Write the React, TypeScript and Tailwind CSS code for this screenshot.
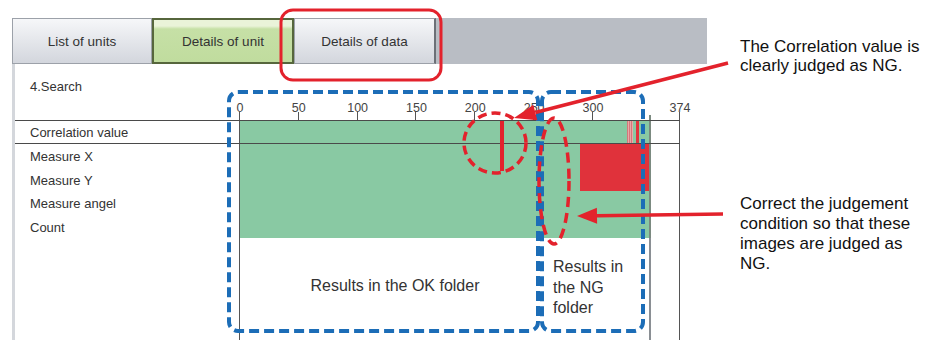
import React from 'react';

const SCALE = 440 / 374;
const ticks = [0, 50, 100, 150, 200, 250, 300, 374];
const measureRows = ['Measure X', 'Measure Y', 'Measure angel', 'Count'];

const RED = '#e3222c';
const BLUE = '#1c6db7';

function Arrow({ from, tip, head = 22, half = 8 }: { from: [number, number]; tip: [number, number]; head?: number; half?: number }) {
  const dx = from[0] - tip[0];
  const dy = from[1] - tip[1];
  const len = Math.hypot(dx, dy);
  const ux = dx / len;
  const uy = dy / len;
  const bx = tip[0] + ux * head;
  const by = tip[1] + uy * head;
  const px = -uy;
  const py = ux;
  const pts = `${tip[0]},${tip[1]} ${bx + px * half},${by + py * half} ${bx - px * half},${by - py * half}`;
  return (
    <g>
      <line x1={from[0]} y1={from[1]} x2={bx} y2={by} stroke={RED} strokeWidth={3.5} />
      <polygon points={pts} fill={RED} />
    </g>
  );
}

export default function App() {
  return (
    <div className="relative flex h-[340px] w-[925px] overflow-hidden bg-white font-['Liberation_Sans',Arial,sans-serif]">
      {/* screenshot of the tool */}
      <div className="flex w-[707px] flex-col pl-[12px] pt-[18px]">
        <div className="flex h-[46px]">
          <div className="flex w-[140px] items-center justify-center border border-[#9ca1a9] bg-gradient-to-b from-[#f6f7f9] to-[#d3d6dd] pt-[2px] text-[13.5px] text-[#333]">
            List of units
          </div>
          <div className="flex w-[142px] items-center justify-center border-2 border-[#56663c] bg-[linear-gradient(#eaf3d9_0,#eaf3d9_6px,#c6e0a6_9px,#c0dc9e_100%)] pt-[2px] text-[13.5px] text-[#333]">
            Details of unit
          </div>
          <div className="flex w-[142px] items-center justify-center border border-r-2 border-[#9ca1a9] border-r-[#6c7077] bg-gradient-to-b from-[#f6f7f9] to-[#d3d6dd] pt-[2px] text-[13.5px] text-[#333]">
            Details of data
          </div>
          <div className="flex-1 bg-[#b9bdc4]" />
        </div>

        <div className="flex flex-1 flex-col border-l-[3px] border-[#d4d7dc]">
          <div className="pl-[15px] pt-[15px] text-[13px] leading-4 text-[#333]">4.Search</div>

          {/* axis */}
          <div className="mt-[6px] flex h-[19px]">
            <div className="w-[224px]" />
            <div className="relative w-[441px]">
              {ticks.map((v) => (
                <React.Fragment key={v}>
                  <span
                    className="absolute top-0 -translate-x-1/2 text-[12.5px] leading-[14px] text-[#444]"
                    style={{ left: v * SCALE + 1 }}
                  >
                    {v}
                  </span>
                  <span className="absolute bottom-0 h-[8px] w-px bg-[#555]" style={{ left: v * SCALE }} />
                </React.Fragment>
              ))}
              <span className="absolute bottom-0 left-[410px] h-[5px] w-[2px] bg-[#7b8a80]" />
            </div>
          </div>

          {/* table body */}
          <div className="flex w-[665px] flex-1 flex-col border-t border-[#4a4a4a] text-[13px] text-[#333]">
            <div className="flex h-[23px] border-b border-[#4a4a4a]">
              <div className="flex w-[224px] items-center pl-[15px] pt-[1px]">Correlation value</div>
              <div className="w-[441px] border-x border-[#555]">
                <div className="flex h-full w-[411px] border-r-2 border-[#7b8a80] bg-[#89c9a3]">
                  <div className="w-[387px]" />
                  <div className="w-[6px] bg-[repeating-linear-gradient(90deg,#d6777a_0,#d6777a_1px,#eaa8a8_1px,#eaa8a8_2px)]" />
                  <div className="ml-[3px] w-[3px] bg-[#e2343c]" />
                </div>
              </div>
            </div>

            <div className="flex h-[94px]">
              <div className="flex w-[224px] flex-col pl-[15px]">
                {measureRows.map((r) => (
                  <div key={r} className="flex h-[23.5px] items-center pt-[2px]">
                    {r}
                  </div>
                ))}
              </div>
              <div className="w-[441px] border-x border-[#555]">
                <div className="flex h-full w-[411px] flex-col border-r-2 border-[#7b8a80] bg-[#89c9a3]">
                  <div className="flex h-[47px]">
                    <div className="w-[340px]" />
                    <div className="flex-1 bg-[#e0323b]" />
                  </div>
                </div>
              </div>
            </div>

            <div className="flex flex-1">
              <div className="w-[224px]" />
              <div className="w-[441px] border-x border-[#555]">
                <div className="flex h-full w-[411px] border-r-2 border-[#8a8f94] text-[16px] leading-[20.5px]">
                  <div className="w-[310px] pt-[38px] text-center">Results in the OK folder</div>
                  <div className="pl-[3px] pt-[19px]">
                    Results in
                    <br />
                    the NG
                    <br />
                    folder
                  </div>
                </div>
              </div>
            </div>
          </div>
        </div>
      </div>

      {/* annotations */}
      <div className="flex flex-col pl-[33px] pt-[38px] text-[17px] text-[#111]">
        <p className="leading-[18.5px]">
          The Correlation value is
          <br />
          clearly judged as NG.
        </p>
        <p className="mt-[119px] leading-5">
          Correct the judgement
          <br />
          condition so that these
          <br />
          images are judged as
          <br />
          NG.
        </p>
      </div>

      <svg className="pointer-events-none absolute inset-0" width={925} height={340} viewBox="0 0 925 340">
        <rect x={281} y={10} width={160} height={70} rx={12} fill="none" stroke={RED} strokeWidth={3} />

        <rect x={229} y={92} width={309} height={239} rx={9} fill="none" stroke={BLUE} strokeWidth={4} strokeDasharray="10 5" />
        <rect x={542} y={92} width={101} height={239} rx={9} fill="none" stroke={BLUE} strokeWidth={4} strokeDasharray="10 5" />

        <ellipse cx={495} cy={143} rx={31} ry={30} fill="none" stroke={RED} strokeWidth={3.5} strokeDasharray="9 5" />
        <line x1={502} y1={121} x2={502} y2={171} stroke={RED} strokeWidth={4} />
        <ellipse cx={554} cy={181} rx={15} ry={63} fill="none" stroke={RED} strokeWidth={3.5} strokeDasharray="10 6" />

        <Arrow from={[728, 63]} tip={[514, 118]} />
        <Arrow from={[723, 214]} tip={[577, 216]} head={20} />
      </svg>
    </div>
  );
}
